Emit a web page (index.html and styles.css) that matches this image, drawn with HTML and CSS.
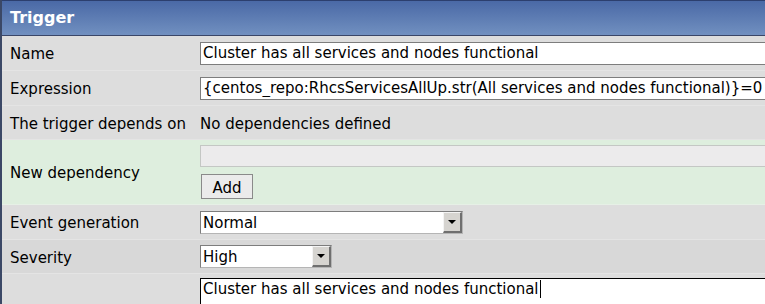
FILE: index.html
```html
<!DOCTYPE html>
<html lang="en">
<head>
    <meta charset="UTF-8">
    <title>Trigger</title>
    <link rel="stylesheet" href="styles.css">
</head>
<body>
    <div class="panel">
        <!-- Заголовок -->
        <div class="panel-head">Trigger</div>

        <div class="row">
            <div class="label">Name</div>
            <div class="field"><input class="text" type="text" value="Cluster has all services and nodes functional"></div>
        </div>

        <div class="row">
            <div class="label">Expression</div>
            <div class="field"><input class="text" type="text" value="{centos_repo:RhcsServicesAllUp.str(All services and nodes functional)}=0"></div>
        </div>

        <div class="row row-thin">
            <div class="label">The trigger depends on</div>
            <div class="field field-note">No dependencies defined</div>
        </div>

        <div class="row row-new">
            <div class="label">New dependency</div>
            <div class="field field-stack">
                <input class="text text-off" type="text" value="">
                <button class="btn" type="button">Add</button>
            </div>
        </div>

        <div class="row">
            <div class="label">Event generation</div>
            <div class="field">
                <div class="select select-wide"><span class="select-val">Normal</span><span class="select-arrow"></span></div>
            </div>
        </div>

        <div class="row row-thin row-dark">
            <div class="label">Severity</div>
            <div class="field">
                <div class="select select-short"><span class="select-val">High</span><span class="select-arrow"></span></div>
            </div>
        </div>

        <div class="row row-last">
            <div class="label"></div>
            <div class="field">
                <div class="area"><span class="caret">Cluster has all services and nodes functional</span></div>
            </div>
        </div>
    </div>
</body>
</html>
```

FILE: styles.css
```css
/* Общие стили */
html, body {
    overflow: hidden;
}

body {
    margin: 0;
    padding: 0;
    font-family: "DejaVu Sans", Verdana, sans-serif;
    font-size: 15px;
    color: #000;
    width: 765px;
    height: 304px;
}

.panel {
    border-left: 2px solid #3b4866;
    height: 304px;
    overflow: hidden;
}

/* Заголовок */
.panel-head {
    height: 34px;
    line-height: 34px;
    border-top: 1px solid #2c3f6e;
    border-bottom: 1px solid #3a4668;
    background: linear-gradient(to bottom, #4a69a6, #7190c0);
    color: #fff;
    font-weight: bold;
    font-size: 16px;
    padding-left: 8px;
}

/* Строки формы */
.row {
    display: flex;
    align-items: center;
    background-color: #dddddd;
    border-bottom: 1px solid #e4e4e4;
    min-height: 34px;
}

.row-thin {
    min-height: 33px;
}

.row-dark {
    background-color: #d8d8d8;
}

.row-new {
    background-color: #deeede;
    border-bottom-color: #e6f0e6;
    height: 64px;
}

.label {
    width: 190px;
    flex: none;
    padding-left: 8px;
    padding-top: 2px;
    white-space: nowrap;
}

.field {
    flex: 1;
    min-width: 0;
    white-space: nowrap;
}

.field-note {
    padding-top: 2px;
}

.field-stack {
    display: flex;
    flex-direction: column;
    align-items: flex-start;
    gap: 7px;
}

/* Поля ввода */
.text {
    box-sizing: border-box;
    width: 620px;
    height: 23px;
    margin: 0;
    padding: 0 2px;
    border: 1px solid #7d7d7d;
    background: #fff;
    font-family: inherit;
    font-size: 15px;
    color: #000;
    display: block;
}

.text-off {
    height: 22px;
    background: #ecebec;
    border-color: #c4c7c4;
}

.btn {
    height: 25px;
    width: 52px;
    margin: 0 0 0 1px;
    padding: 2px 0 0;
    border: 1px solid #8a8a8a;
    background: #ebebeb;
    font-family: inherit;
    font-size: 15px;
    color: #000;
}

/* Выпадающие списки */
.select {
    box-sizing: border-box;
    display: flex;
    align-items: stretch;
    height: 23px;
    border: 1px solid #7d7d7d;
    border-right-color: #b5b5b5;
    border-bottom-color: #b5b5b5;
    background: #fff;
}

.select-wide {
    width: 263px;
}

.select-short {
    width: 132px;
}

.select-val {
    flex: 1;
    padding-left: 2px;
    line-height: 23px;
}

.select-arrow {
    width: 19px;
    flex: none;
    background: #d6d4d0;
    border-left: 1px solid #f4f4f4;
    border-top: 1px solid #f4f4f4;
    border-right: 2px solid #6f6f6f;
    border-bottom: 2px solid #6f6f6f;
    box-sizing: border-box;
    display: flex;
    align-items: center;
    justify-content: center;
}

.select-arrow::after {
    content: "";
    border-left: 4px solid transparent;
    border-right: 4px solid transparent;
    border-top: 4px solid #000;
}

/* Последнее поле */
.row-last {
    align-items: flex-start;
    padding-top: 4px;
    height: 40px;
    border-bottom: none;
}

.area {
    box-sizing: border-box;
    width: 620px;
    height: 60px;
    border: 1px solid #000;
    background: #fff;
    padding: 1px 2px;
}

.caret {
    border-right: 1px solid #000;
    padding-right: 1px;
}
```
